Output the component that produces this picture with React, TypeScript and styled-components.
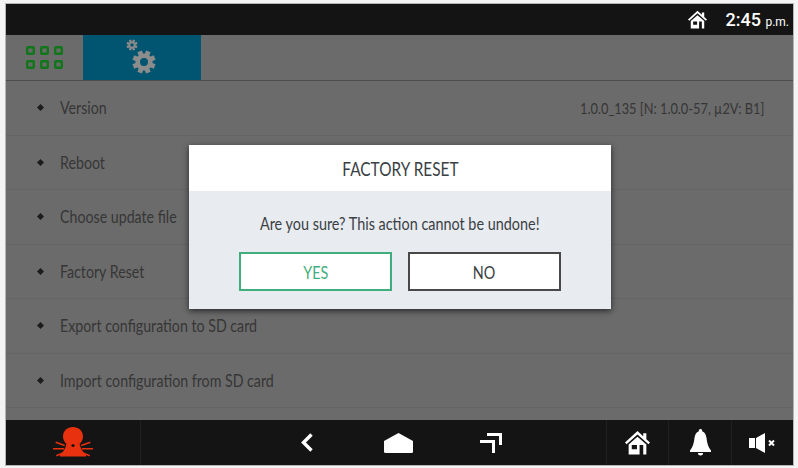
import React from 'react';
import styled, { createGlobalStyle } from 'styled-components';

const GlobalStyle = createGlobalStyle`
  html, body {
    margin: 0;
    padding: 0;
    background: #f4f4f4;
  }
`;

const rows = [
  'Version',
  'Reboot',
  'Choose update file',
  'Factory Reset',
  'Export configuration to SD card',
  'Import configuration from SD card',
];

function App() {
  return (
    <Frame>
      <GlobalStyle />
      <Screen>
        <StatusBar>
          <HomeIcon size={19} />
          <Clock>
            2:45 <small>p.m.</small>
          </Clock>
        </StatusBar>

        <TabBar>
          <AppsTab>
            <svg width="37" height="23" viewBox="0 0 37 23" fill="none" stroke="#11751a" strokeWidth="2.400">
              <rect x="1.200" y="1.200" width="6.600" height="6.600" rx="0.800" />
              <rect x="15.200" y="1.200" width="6.600" height="6.600" rx="0.800" />
              <rect x="29.200" y="1.200" width="6.600" height="6.600" rx="0.800" />
              <rect x="1.200" y="15.200" width="6.600" height="6.600" rx="0.800" />
              <rect x="15.200" y="15.200" width="6.600" height="6.600" rx="0.800" />
              <rect x="29.200" y="15.200" width="6.600" height="6.600" rx="0.800" />
            </svg>
          </AppsTab>
          <SettingsTab>
            <svg width="36" height="40" viewBox="0 0 36 40">
              <Gear cx={8} cy={7} outer={5.500} inner={3.200} hole={1.800} />
              <Gear cx={20} cy={24} outer={11.500} inner={8.600} hole={4} />
            </svg>
          </SettingsTab>
        </TabBar>

        <List>
          {rows.map((label, index) => (
            <Row key={label}>
              <Bullet />
              <RowLabel>{label}</RowLabel>
              {index === 0 ? <RowValue>1.0.0_135 [N: 1.0.0-57, µ2V: B1]</RowValue> : null}
            </Row>
          ))}
        </List>

        <BottomBar>
          <AlarmCell>
            <AlarmIcon />
          </AlarmCell>
          <NavCell>
            <svg width="13" height="19" viewBox="0 0 13 19" fill="none" stroke="#fff" strokeWidth="3.400">
              <path d="M11.500 1.500 3.500 9.500l8 8" />
            </svg>
            <svg width="29" height="20" viewBox="0 0 29 20" fill="#fff">
              <path d="M14.500 0 29 8v10.500a1.500 1.500 0 0 1-1.500 1.500h-26A1.500 1.500 0 0 1 0 18.500V8z" />
            </svg>
            <svg width="22" height="20" viewBox="0 0 22 20" fill="none" stroke="#fff" strokeWidth="3">
              <path d="M7 1.500h13.500V12M0 8.500h13.500V20" />
            </svg>
          </NavCell>
          <IconCell>
            <HomeIcon size={25} />
          </IconCell>
          <IconCell>
            <BellIcon />
          </IconCell>
          <IconCell>
            <MuteIcon />
          </IconCell>
        </BottomBar>

        <Overlay>
          <Dialog>
            <DialogTitle>
              <TitleText>FACTORY RESET</TitleText>
            </DialogTitle>
            <DialogBody>
              <DialogText>Are you sure? This action cannot be undone!</DialogText>
              <DialogActions>
                <DialogButton $accent>
                  <ButtonText>YES</ButtonText>
                </DialogButton>
                <DialogButton>
                  <ButtonText>NO</ButtonText>
                </DialogButton>
              </DialogActions>
            </DialogBody>
          </Dialog>
        </Overlay>
      </Screen>
    </Frame>
  );
}

function HomeIcon({ size }: { size: number }) {
  return (
    <svg width={size} height={size} viewBox="0 0 24 24" fill="#fff">
      <path d="M12 1 0 12l1.500 1.700L12 4.200l10.500 9.500L24 12l-3.500-3.200V3h-3v3.100z" />
      <path fillRule="evenodd" d="M12 6.500 3.500 14v9.500h17V14zM6.500 14.500h5v4h-5zM14 14.500h3.500v9H14z" />
    </svg>
  );
}

function Gear({ cx, cy, outer, inner, hole }: { cx: number; cy: number; outer: number; inner: number; hole: number }) {
  const toothWidth = outer * 0.42;
  return (
    <g fill="#8c8c8c">
      {[0, 45, 90, 135, 180, 225, 270, 315].map((angle) => (
        <rect
          key={angle}
          x={cx - toothWidth / 2}
          y={cy - outer}
          width={toothWidth}
          height={outer - inner + 1}
          transform={`rotate(${angle + 22.500} ${cx} ${cy})`}
        />
      ))}
      <circle cx={cx} cy={cy} r={(inner + hole) / 2} fill="none" stroke="#8c8c8c" strokeWidth={inner - hole} />
    </g>
  );
}

function AlarmIcon() {
  return (
    <svg width="40" height="31" viewBox="0 0 40 31" fill="#e8310f">
      <path d="M20 0c5.500 0 10 3.800 10 9.500 0 3.300-1.500 5.800-3.500 7.500 1 4 2.500 7 6.500 11v1.500H7V28c4-4 5.500-7 6.500-11-2-1.700-3.500-4.200-3.500-7.500C10 3.800 14.500 0 20 0z" />
      <circle cx="20" cy="18.500" r="1.600" fill="#141414" />
      <path d="M3 14.500l9 3.300-.6 1.500-9-3.300zM37 14.500l-9 3.300.6 1.500 9-3.300zM0 21h11v1.500H0zM29 21h11v1.500H29zM3 28l8.500-3.500.6 1.400-8.500 3.500zM37 28l-8.500-3.500-.6 1.400 8.500 3.500z" />
    </svg>
  );
}

function BellIcon() {
  return (
    <svg width="21" height="27" viewBox="0 0 21 27" fill="#fff">
      <path d="M10.500 0a1.600 1.600 0 0 1 1.600 2.200C15 3.200 16 5.500 16.500 9c.6 5 1.500 9 4.500 12.500V23H0v-1.500C3 18 3.900 14 4.500 9 5 5.500 6 3.200 8.900 2.200A1.600 1.600 0 0 1 10.500 0zM8 24h5a2.500 2.500 0 0 1-5 0z" />
    </svg>
  );
}

function MuteIcon() {
  return (
    <svg width="26" height="20" viewBox="0 0 26 20" fill="#fff">
      <path d="M0 5h6v10H0zM7 5l9-5v20l-9-5z" />
      <path d="M20 7.500l5 5M25 7.500l-5 5" stroke="#fff" strokeWidth="2" fill="none" />
    </svg>
  );
}

const Frame = styled.div`
  box-sizing: border-box;
  width: 798px;
  height: 468px;
  padding: 4px 5px 3px 6px;
  font-family: Lato, 'Open Sans', sans-serif;
`;

const Screen = styled.div`
  position: relative;
  height: 461px;
  display: flex;
  flex-direction: column;
  overflow: hidden;
  background: #6b6b6b;
  outline: 1px solid #b4b4b4;
  outline-offset: 0;
`;

const StatusBar = styled.div`
  height: 31px;
  flex: none;
  display: flex;
  align-items: center;
  justify-content: flex-end;
  gap: 18px;
  padding-right: 4px;
  background: #141414;
`;

const Clock = styled.span`
  font-family: Roboto, sans-serif;
  font-size: 18px;
  font-weight: 500;
  color: #fff;

  small {
    font-size: 12px;
    font-weight: 400;
  }
`;

const TabBar = styled.div`
  height: 45px;
  flex: none;
  display: flex;
  border-bottom: 1px solid #4d4d4d;
`;

const AppsTab = styled.div`
  width: 77px;
  padding-right: 1px;
  box-sizing: border-box;
  display: flex;
  align-items: center;
  justify-content: center;
`;

const SettingsTab = styled.div`
  width: 118px;
  display: flex;
  align-items: center;
  justify-content: center;
  background: #025570;
`;

const List = styled.div`
  flex: 1;
  min-height: 0;
  display: flex;
  flex-direction: column;
`;

const Row = styled.div`
  height: 54.500px;
  flex: none;
  box-sizing: border-box;
  display: flex;
  align-items: center;
  padding: 0 29px 0 32px;
  border-bottom: 1px solid #646464;
  font-size: 17px;
  color: #363636;
`;

const Bullet = styled.span`
  width: 5px;
  height: 5px;
  margin-right: 17px;
  background: #1c1c1c;
  transform: rotate(45deg);
`;

const RowLabel = styled.span`
  transform: scaleX(0.835);
  transform-origin: left center;
  white-space: nowrap;
`;

const RowValue = styled.span`
  margin-left: auto;
  font-size: 16px;
  transform: scaleX(0.8);
  transform-origin: right center;
  white-space: nowrap;
`;

const BottomBar = styled.div`
  height: 45px;
  flex: none;
  display: flex;
  align-items: center;
  background: #141414;
`;

const AlarmCell = styled.div`
  width: 135px;
  height: 100%;
  flex: none;
  display: flex;
  align-items: center;
  justify-content: center;
  box-sizing: border-box;
  border-right: 1px solid #202020;
`;

const NavCell = styled.div`
  flex: 1;
  display: grid;
  grid-template-columns: 84px 96px 22px;
  align-items: center;
  padding-left: 159px;
`;

const IconCell = styled.div`
  width: 62.330px;
  height: 100%;
  flex: none;
  box-sizing: border-box;
  display: flex;
  align-items: center;
  justify-content: center;
  border-left: 1px solid #202020;
`;

const Overlay = styled.div`
  position: absolute;
  left: 183px;
  top: 141px;
`;

const Dialog = styled.div`
  width: 422px;
  box-shadow: 0 2px 6px rgba(0, 0, 0, 0.65);
  color: #3a3f44;
`;

const DialogTitle = styled.div`
  height: 46px;
  display: flex;
  align-items: center;
  justify-content: center;
  background: #fff;
`;

const TitleText = styled.span`
  font-size: 20px;
  transform: scaleX(0.77);
  white-space: nowrap;
`;

const DialogBody = styled.div`
  height: 118px;
  box-sizing: border-box;
  display: flex;
  flex-direction: column;
  align-items: center;
  padding-top: 21px;
  background: #e8ebf0;
`;

const DialogText = styled.div`
  font-size: 18px;
  line-height: 22px;
  transform: scaleX(0.8);
  white-space: nowrap;
`;

const DialogActions = styled.div`
  display: flex;
  gap: 16px;
  margin-top: 18px;
`;

const DialogButton = styled.div<{ $accent?: boolean }>`
  box-sizing: border-box;
  width: 153px;
  height: 39px;
  display: flex;
  align-items: center;
  justify-content: center;
  background: #fff;
  border: 2px solid ${(props) => (props.$accent ? '#3fae7c' : '#484848')};
  color: ${(props) => (props.$accent ? '#3fae7c' : '#3a3f44')};
`;

const ButtonText = styled.span`
  font-size: 18px;
  transform: scaleX(0.8);
`;

export default App;
